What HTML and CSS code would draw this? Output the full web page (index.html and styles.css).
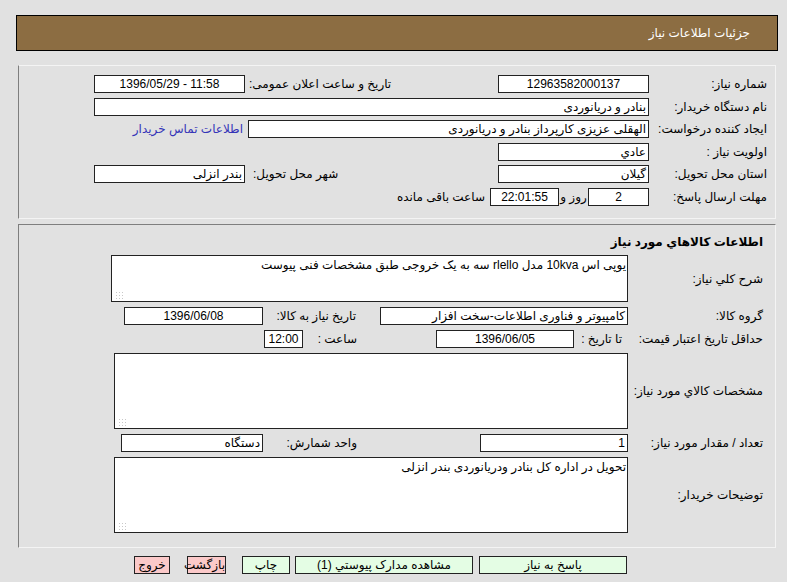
FILE: index.html
```html
<!DOCTYPE html>
<html lang="fa" dir="rtl">
<head>
<meta charset="utf-8">
<title>جزئیات اطلاعات نیاز</title>
<link rel="stylesheet" href="styles.css">
</head>
<body>
<div class="header">جزئیات اطلاعات نیاز</div>

<div class="sec sec1">
  <div class="row">
    <div class="lbl">شماره نیاز:</div>
    <div class="box w151 c">12963582000137</div>
    <div class="lbl2">تاریخ و ساعت اعلان عمومی:</div>
    <div class="box w151 c ltr">1396/05/29 - 11:58</div>
  </div>
  <div class="row">
    <div class="lbl">نام دستگاه خریدار:</div>
    <div class="box w555">بنادر و دریانوردی</div>
  </div>
  <div class="row">
    <div class="lbl">ایجاد کننده درخواست:</div>
    <div class="box w401">الهقلی عزیزی کارپرداز بنادر و دریانوردی</div>
    <a class="link" href="#">اطلاعات تماس خریدار</a>
  </div>
  <div class="row">
    <div class="lbl">اولویت نیاز :</div>
    <div class="box w151">عادي</div>
  </div>
  <div class="row">
    <div class="lbl">استان محل تحویل:</div>
    <div class="box w151">گیلان</div>
    <div class="lbl2 pl8">شهر محل تحویل:</div>
    <div class="box w151">بندر انزلی</div>
  </div>
  <div class="row">
    <div class="lbl">مهلت ارسال پاسخ:</div>
    <div class="box w61 c">2</div>
    <div class="txt w29 c">روز و</div>
    <div class="box w69 c">22:01:55</div>
    <div class="txt mr5">ساعت باقی مانده</div>
  </div>
</div>

<div class="sec sec2">
  <div class="title">اطلاعات کالاهاي مورد نیاز</div>
  <div class="row2 h47">
    <div class="lbl l135">شرح کلي نیاز:</div>
    <div class="area w517">یوپی اس 10kva مدل rlello سه به یک خروجی طبق مشخصات فنی پیوست<span class="grip"></span></div>
  </div>
  <div class="row2">
    <div class="lbl l135">گروه کالا:</div>
    <div class="box w248">کامپیوتر و فناوری اطلاعات-سخت افزار</div>
    <div class="cell w117 pr24">تاریخ نیاز به کالا:</div>
    <div class="box w139 c">1396/06/08</div>
  </div>
  <div class="row2">
    <div class="lbl l135">حداقل تاریخ اعتبار قیمت:</div>
    <div class="cell w54 pr6">تا تاریخ :</div>
    <div class="box w138 c">1396/06/05</div>
    <div class="cell w133 pr79">ساعت :</div>
    <div class="box w39 c">12:00</div>
  </div>
  <div class="row2 h76">
    <div class="lbl l135">مشخصات کالاي مورد نیاز:</div>
    <div class="area w514"><span class="grip"></span></div>
  </div>
  <div class="row2">
    <div class="lbl l135">تعداد / مقدار مورد نیاز:</div>
    <div class="box w148">1</div>
    <div class="cell w217 pr123">واحد شمارش:</div>
    <div class="box w142">دستگاه</div>
  </div>
  <div class="row2 h76">
    <div class="lbl l135">توضیحات خریدار:</div>
    <div class="area w514">تحویل در اداره کل بنادر ودریانوردی بندر انزلی<span class="grip"></span></div>
  </div>
</div>

<div class="buttons">
  <div class="btn green w148">پاسخ به نیاز</div>
  <div class="btn green w178 ml5">مشاهده مدارک پیوستي (1)</div>
  <div class="btn green w48 ml16">چاپ</div>
  <div class="btn pink w39 ml17">بازگشت</div>
  <div class="btn pink w36">خروج</div>
</div>
</body>
</html>
```

FILE: styles.css
```css
* { box-sizing: border-box; }

html, body {
  margin: 0;
  padding: 0;
}

body {
  width: 787px;
  height: 582px;
  overflow: hidden;
  background: #e1e1e1;
  font-family: "Liberation Sans", "DejaVu Sans", sans-serif;
  font-size: 12px;
  color: #000;
  direction: rtl;
}

.header {
  margin: 15px 9px 0 16px;
  height: 36px;
  background: #8c6d42;
  border: 1px solid #000;
  color: #fff;
  font-size: 12px;
  line-height: 34px;
  padding-right: 27px;
}

.sec {
  margin-left: 18px;
  margin-right: 11px;
  border: 1px solid #f4f4f4;
  border-left-color: #7e7e7e;
  display: flex;
  flex-direction: column;
}

.sec1 {
  margin-top: 14px;
  height: 154px;
  padding: 9px 8px 0 0;
  gap: 4.5px;
}

.sec2 {
  margin-top: 5px;
  height: 324px;
  border-top-color: #7e7e7e;
  padding: 8px 12px 0 0;
  gap: 5px;
}

.row {
  display: flex;
  align-items: center;
  height: 18px;
}

.row2 {
  display: flex;
  align-items: center;
  height: 18px;
}

.h47 { height: 47px; }
.h76 { height: 76px; }

.title {
  font-weight: bold;
  line-height: 18px;
  height: 18px;
  margin-bottom: -1px;
}

.lbl {
  width: 118px;
  flex: none;
  white-space: nowrap;
  line-height: 18px;
}

.l135 { width: 135px; }

.lbl2 {
  width: 253px;
  flex: none;
  text-align: left;
  padding-left: 4px;
  white-space: nowrap;
}

.pl8 { padding-left: 8px; }

.cell {
  flex: none;
  white-space: nowrap;
  text-align: right;
}

.pr6 { padding-right: 6px; }
.pr24 { padding-right: 24px; }
.pr79 { padding-right: 79px; }
.pr123 { padding-right: 123px; }

.txt {
  flex: none;
  white-space: nowrap;
}

.mr5 { margin-right: 5px; }

.box {
  flex: none;
  height: 18px;
  background: #fff;
  border: 1px solid #222;
  line-height: 16px;
  padding: 0 2px;
  white-space: nowrap;
  overflow: hidden;
  text-align: right;
}

.c { text-align: center; }
.ltr { direction: ltr; }

.area {
  position: relative;
  flex: none;
  height: 100%;
  background: #fff;
  border: 1px solid #222;
  padding: 2px 1px;
  line-height: 14px;
  text-align: right;
  overflow: hidden;
}

.grip {
  position: absolute;
  left: 3px;
  bottom: 2px;
  width: 8px;
  height: 8px;
  background-image: radial-gradient(circle, #c8c8c8 0.8px, transparent 1px);
  background-size: 3px 3px;
}

.link {
  color: #3434b8;
  text-decoration: none;
  margin-right: 5px;
  white-space: nowrap;
}

.w29 { width: 29px; }
.w36 { width: 36px; }
.w39 { width: 39px; }
.w48 { width: 48px; }
.w54 { width: 54px; }
.w61 { width: 61px; }
.w69 { width: 69px; }
.w117 { width: 117px; }
.w133 { width: 133px; }
.w138 { width: 138px; }
.w139 { width: 139px; }
.w142 { width: 142px; }
.w148 { width: 148px; }
.w151 { width: 151px; }
.w178 { width: 178px; }
.w217 { width: 217px; }
.w248 { width: 248px; }
.w401 { width: 401px; }
.w514 { width: 514px; }
.w517 { width: 517px; }
.w555 { width: 555px; }

.buttons {
  display: flex;
  gap: 6px;
  margin: 8px 160px 0 0;
}

.buttons .ml5 { margin-left: -1px; }
.buttons .ml16 { margin-left: 10px; }
.buttons .ml17 { margin-left: 11px; }

.btn {
  flex: none;
  height: 18px;
  border: 1px solid #222;
  line-height: 16px;
  text-align: center;
  white-space: nowrap;
}

.green { background: #e4fde4; }
.pink { background: #fbc9c9; }
```
